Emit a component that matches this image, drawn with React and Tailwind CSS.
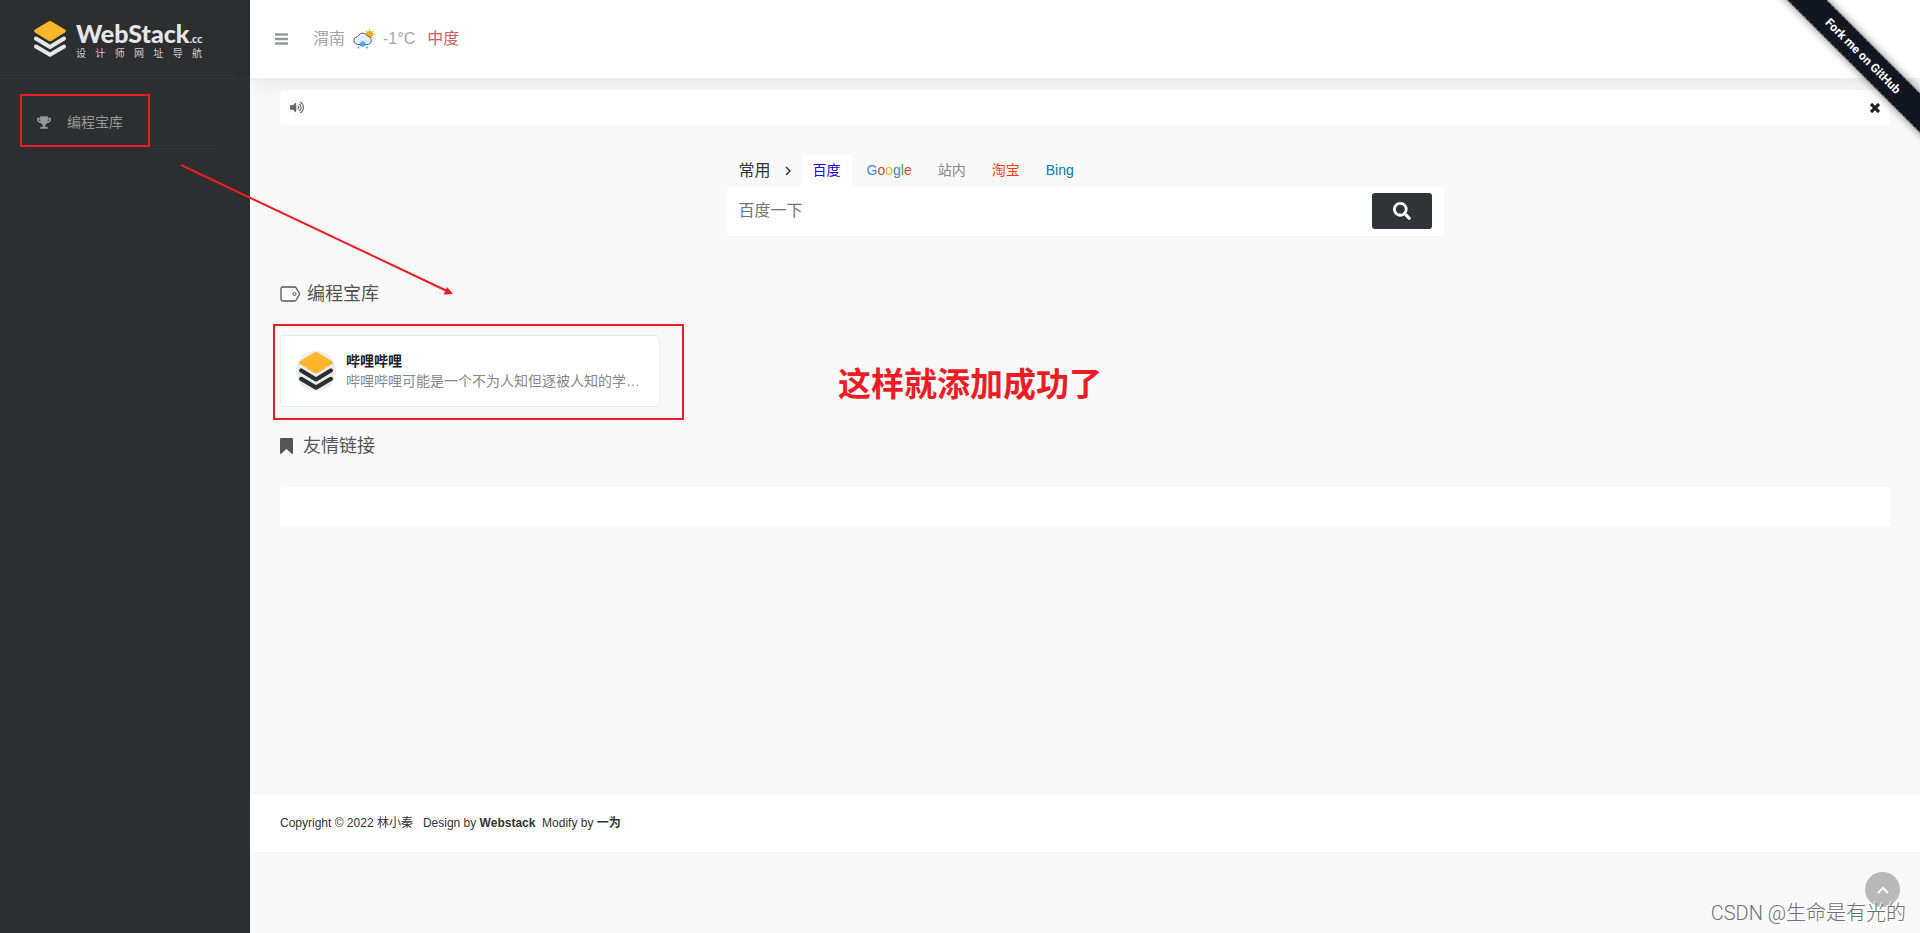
import { FaSearch, FaTrophy, FaVolumeUp } from "react-icons/fa";

const engines = [
  { id: "baidu", name: "百度", className: "bg-white text-[#2100e0]" },
  { id: "google", name: "Google" },
  { id: "site", name: "站内", className: "text-[#888888]" },
  { id: "taobao", name: "淘宝", className: "text-[#ff4400]" },
  { id: "bing", name: "Bing", className: "text-[#007daa]" },
];

const sites = [
  {
    name: "哔哩哔哩",
    desc: "哔哩哔哩可能是一个不为人知但逐被人知的学…",
  },
];

function StackLogo({ className, layer }) {
  return (
    <svg viewBox="0 0 32 36" className={className} aria-hidden="true">
      <path
        d="M14.4 .5q1.6-.8 3.200 0L31.300 8.800q1.200 1.200 0 2.400L17.600 19.800q-1.600.8-3.200 0L.7 11.200q-1.200-1.200 0-2.400z"
        fill="#fdb52a"
      />
      <path d="M2 17.500l14 8.500 14-8.500M2 25.500l14 8.300 14-8.300" fill="none" stroke={layer} strokeWidth="4" strokeLinecap="round" strokeLinejoin="round" />
    </svg>
  );
}

function WeatherIcon() {
  return (
    <svg viewBox="0 0 22 20" className="h-5 w-[22px]" aria-hidden="true">
      <path
        d="M16.500 0v1.400M16.500 9.600V11M11 5.500h1.400M20.600 5.500H22M12.600 1.600l1 1M20.400 1.600l-1 1M20.400 9.400l-1-1"
        stroke="#f2b233"
        strokeWidth="1.300"
      />
      <circle cx="16.500" cy="5.500" r="3.600" fill="#f2aa1f" />
      <path
        d="M4.500 15.500A4 4 0 0 1 4 7.600 3 3 0 0 1 5.500 6.500 5 5 0 0 1 14.300 7a4.400 4.400 0 0 1 1.200 8.500z"
        fill="#e1effc"
        stroke="#5f6368"
        strokeWidth="1"
      />
      <path d="M9.800 12v6M7.200 13.500l5.200 3M12.400 13.500l-5.200 3" stroke="#4aa5ee" strokeWidth="1.600" />
      <circle cx="5.500" cy="18.500" r="1" fill="#4aa5ee" />
      <circle cx="14" cy="18.500" r="1" fill="#4aa5ee" />
    </svg>
  );
}

function Sidebar() {
  return (
    <aside className="w-[250px] shrink-0 bg-[#2c2e2f]">
      <a href="#home" className="flex h-[79px] items-start gap-2 border-b border-[#313437] pl-[34px] pt-[21px]">
        <StackLogo className="h-9 w-8" layer="#e6e6e6" />
        <span className="flex w-32 flex-col pt-[3px]">
          <span className="flex items-baseline justify-between pl-0.5 font-[Lato,sans-serif] text-[25px] font-black leading-[18px] text-[#e6e6e6]">
            WebStack
            <span className="text-[11px] font-bold">.cc</span>
          </span>
          <span className="flex justify-between pl-0.5 text-[10px] leading-3 text-[#d0d0d0]">
            {"设计师网址导航".split("").map((char) => (
              <span key={char}>{char}</span>
            ))}
          </span>
        </span>
      </a>
      <nav className="px-[30px] pt-5">
        <a href="#treasure" className="flex h-[47px] items-center gap-4 border-b border-[#313437] pl-[7px] text-sm text-[#979898]">
          <FaTrophy className="h-[13px] w-[14px]" />
          编程宝库
        </a>
      </nav>
    </aside>
  );
}

function Header() {
  return (
    <header className="flex h-[78px] items-center bg-white pl-[25px] shadow-[0_5px_20px_rgba(0,0,0,0.08)]">
      <button type="button" aria-label="菜单" className="text-[#979898]">
        <svg viewBox="0 0 13 12" className="h-3 w-[13px]" stroke="currentColor" strokeWidth="2.400">
          <path d="M0 1.500h13M0 6h13M0 10.500h13" />
        </svg>
      </button>
      <div className="ml-[25px] flex items-center gap-2 text-base text-[#a5a5a5]">
        <span>渭南</span>
        <WeatherIcon />
        <span>-1°C</span>
        <span className="ml-1 text-[#cb6060]">中度</span>
      </div>
    </header>
  );
}

function GoogleName() {
  return (
    <>
      <span className="text-[#4285f4]">G</span>
      <span className="text-[#ea4335]">o</span>
      <span className="text-[#fbbc05]">o</span>
      <span className="text-[#4285f4]">g</span>
      <span className="text-[#34a853]">l</span>
      <span className="text-[#ea4335]">e</span>
    </>
  );
}

function SearchBox() {
  return (
    <form className="mx-auto mt-[30px] w-full max-w-[717px]" onSubmit={(e) => e.preventDefault()}>
      <div className="flex h-[31px] items-center pl-3">
        <span className="text-base text-[#333333]">常用</span>
        <svg viewBox="0 0 6 10" className="ml-[14px] mr-[10px] h-[10px] w-[6px]" fill="none" stroke="#333333" strokeWidth="1.400">
          <path d="M1 1l4 4-4 4" />
        </svg>
        <div className="ml-px flex h-full gap-1">
          {engines.map((engine) => (
            <button key={engine.id} type="button" className={`h-full rounded-t-[3px] px-[11px] pb-0.5 text-sm ${engine.className || ""}`}>
              {engine.id === "google" ? <GoogleName /> : engine.name}
            </button>
          ))}
        </div>
      </div>
      <div className="flex h-[50px] items-center rounded-[3px] bg-white pl-3 pr-3">
        <input
          type="text"
          aria-label="搜索"
          placeholder="百度一下"
          className="min-w-0 flex-1 text-base text-[#333333] outline-none placeholder:text-[#757575]"
        />
        <button type="submit" aria-label="搜索" className="flex h-9 w-[60px] items-center justify-center rounded-[3px] bg-[#313437] text-white">
          <FaSearch className="h-[18px] w-[18px]" />
        </button>
      </div>
    </form>
  );
}

function SiteCard({ site }) {
  return (
    <a href="#bilibili" className="flex h-[72px] w-[380px] items-center gap-[10px] rounded border border-[#e4ecf3] bg-white px-[15px]">
      <span className="flex size-10 shrink-0 items-center justify-center rounded-full bg-[#ececec]">
        <StackLogo className="h-[38px] w-[34px]" layer="#2c2e2f" />
      </span>
      <span className="text-sm leading-5">
        <strong className="block font-bold text-[#222222]">{site.name}</strong>
        <span className="block whitespace-nowrap text-[#888888]">{site.desc}</span>
      </span>
    </a>
  );
}

function Ribbon() {
  return (
    <div className="absolute right-0 top-0 size-[150px] overflow-hidden">
      <a
        href="#github"
        className="absolute -right-[58px] top-[42px] flex h-7 w-[230px] rotate-45 items-center justify-center border-y border-dashed border-[#5b5f68] bg-[#121621] font-[Roboto,sans-serif] text-xs font-bold text-white shadow-[0_0_8px_rgba(0,0,0,0.5)]"
      >
        Fork me on GitHub
      </a>
    </div>
  );
}

// Red boxes, arrow and caption drawn over the page
function Annotations() {
  return (
    <div className="pointer-events-none absolute inset-0">
      <div className="absolute left-5 top-[94px] h-[53px] w-[130px] border-2 border-[#ed1c24]" />
      <div className="absolute left-[273px] top-[324px] h-24 w-[411px] border-2 border-[#ed1c24]" />
      <svg className="absolute left-[180px] top-[164px] h-[134px] w-[274px]" viewBox="0 0 274 134">
        <path d="M1 1L266 126.500" stroke="#ed1c24" strokeWidth="2" />
        <path d="M273 130l-9.500.5 3.600-7.600z" fill="#ed1c24" />
      </svg>
      <p className="absolute left-[838px] top-[365px] text-[33px] font-bold leading-10 text-[#ed1c24]">这样就添加成功了</p>
    </div>
  );
}

export default function App() {
  return (
    <div className="relative flex min-h-screen overflow-hidden bg-[#f9f9f9] font-['Liberation_Sans','Noto_Sans_CJK_SC',sans-serif]">
      <Sidebar />
      <div className="flex min-w-0 flex-1 flex-col">
        <Header />
        <main className="flex-1 px-[30px] pt-3">
          <div className="flex h-[35px] items-center justify-between rounded bg-white/80 px-[10px]">
            <FaVolumeUp className="h-[13px] w-[14px] text-[#666666]" />
            <button type="button" aria-label="关闭" className="text-[#222222]">
              <svg viewBox="0 0 10 10" className="h-[10px] w-[10px]" stroke="currentColor" strokeWidth="3.200">
                <path d="M1 1l8 8M9 1L1 9" />
              </svg>
            </button>
          </div>
          <SearchBox />
          <h4 className="mt-11 flex h-7 items-center gap-[7px] text-lg text-[#555555]">
            <svg viewBox="0 0 20 16" className="h-4 w-5" fill="none" stroke="#555555" strokeWidth="1.300">
              <path d="M3 1h11.500q1 0 1.700 1l3 5q.6 1 0 2l-3 5q-.7 1-1.700 1H3q-2 0-2-2V3q0-2 2-2z" />
              <circle cx="14.500" cy="8" r="1.500" strokeWidth="1" />
            </svg>
            编程宝库
          </h4>
          <div className="mt-[27px] flex flex-wrap">
            {sites.map((site) => (
              <SiteCard key={site.name} site={site} />
            ))}
          </div>
          <h4 className="mt-[25px] flex h-7 items-center gap-[10px] text-lg text-[#555555]">
            <svg viewBox="0 0 13 16" className="h-4 w-[13px]" fill="currentColor">
              <path d="M1 0h11q1 0 1 1v14.500q-.5.8-1.300.2L6.500 11 1.300 15.700q-.8.6-1.300-.2V1q0-1 1-1z" />
            </svg>
            友情链接
          </h4>
          <div className="mt-[27px] h-10 rounded bg-white" />
        </main>
        <footer className="mb-[81px] flex h-[57px] items-center whitespace-pre bg-white px-[30px] pb-0.5 text-xs text-[#333333]">
          Copyright © 2022 林小秦   Design by <a href="#webstack" className="font-bold">Webstack</a>  Modify by <a href="#yiwei" className="font-bold">一为</a>
        </footer>
      </div>
      <button type="button" aria-label="返回顶部" className="absolute bottom-[26px] right-5 flex size-[35px] items-center justify-center rounded-full bg-[#b9b9b9]">
        <svg viewBox="0 0 12 8" className="h-2 w-3" fill="none" stroke="#ffffff" strokeWidth="2">
          <path d="M1 7l5-5 5 5" />
        </svg>
      </button>
      <Ribbon />
      <Annotations />
      <p className="absolute bottom-[5px] right-[14px] font-[Roboto,'Noto_Sans_CJK_SC',sans-serif] text-xl font-light leading-[30px] text-[#707070] [text-shadow:-1px_-1px_0_#ffffff]">
        CSDN @生命是有光的
      </p>
    </div>
  );
}
